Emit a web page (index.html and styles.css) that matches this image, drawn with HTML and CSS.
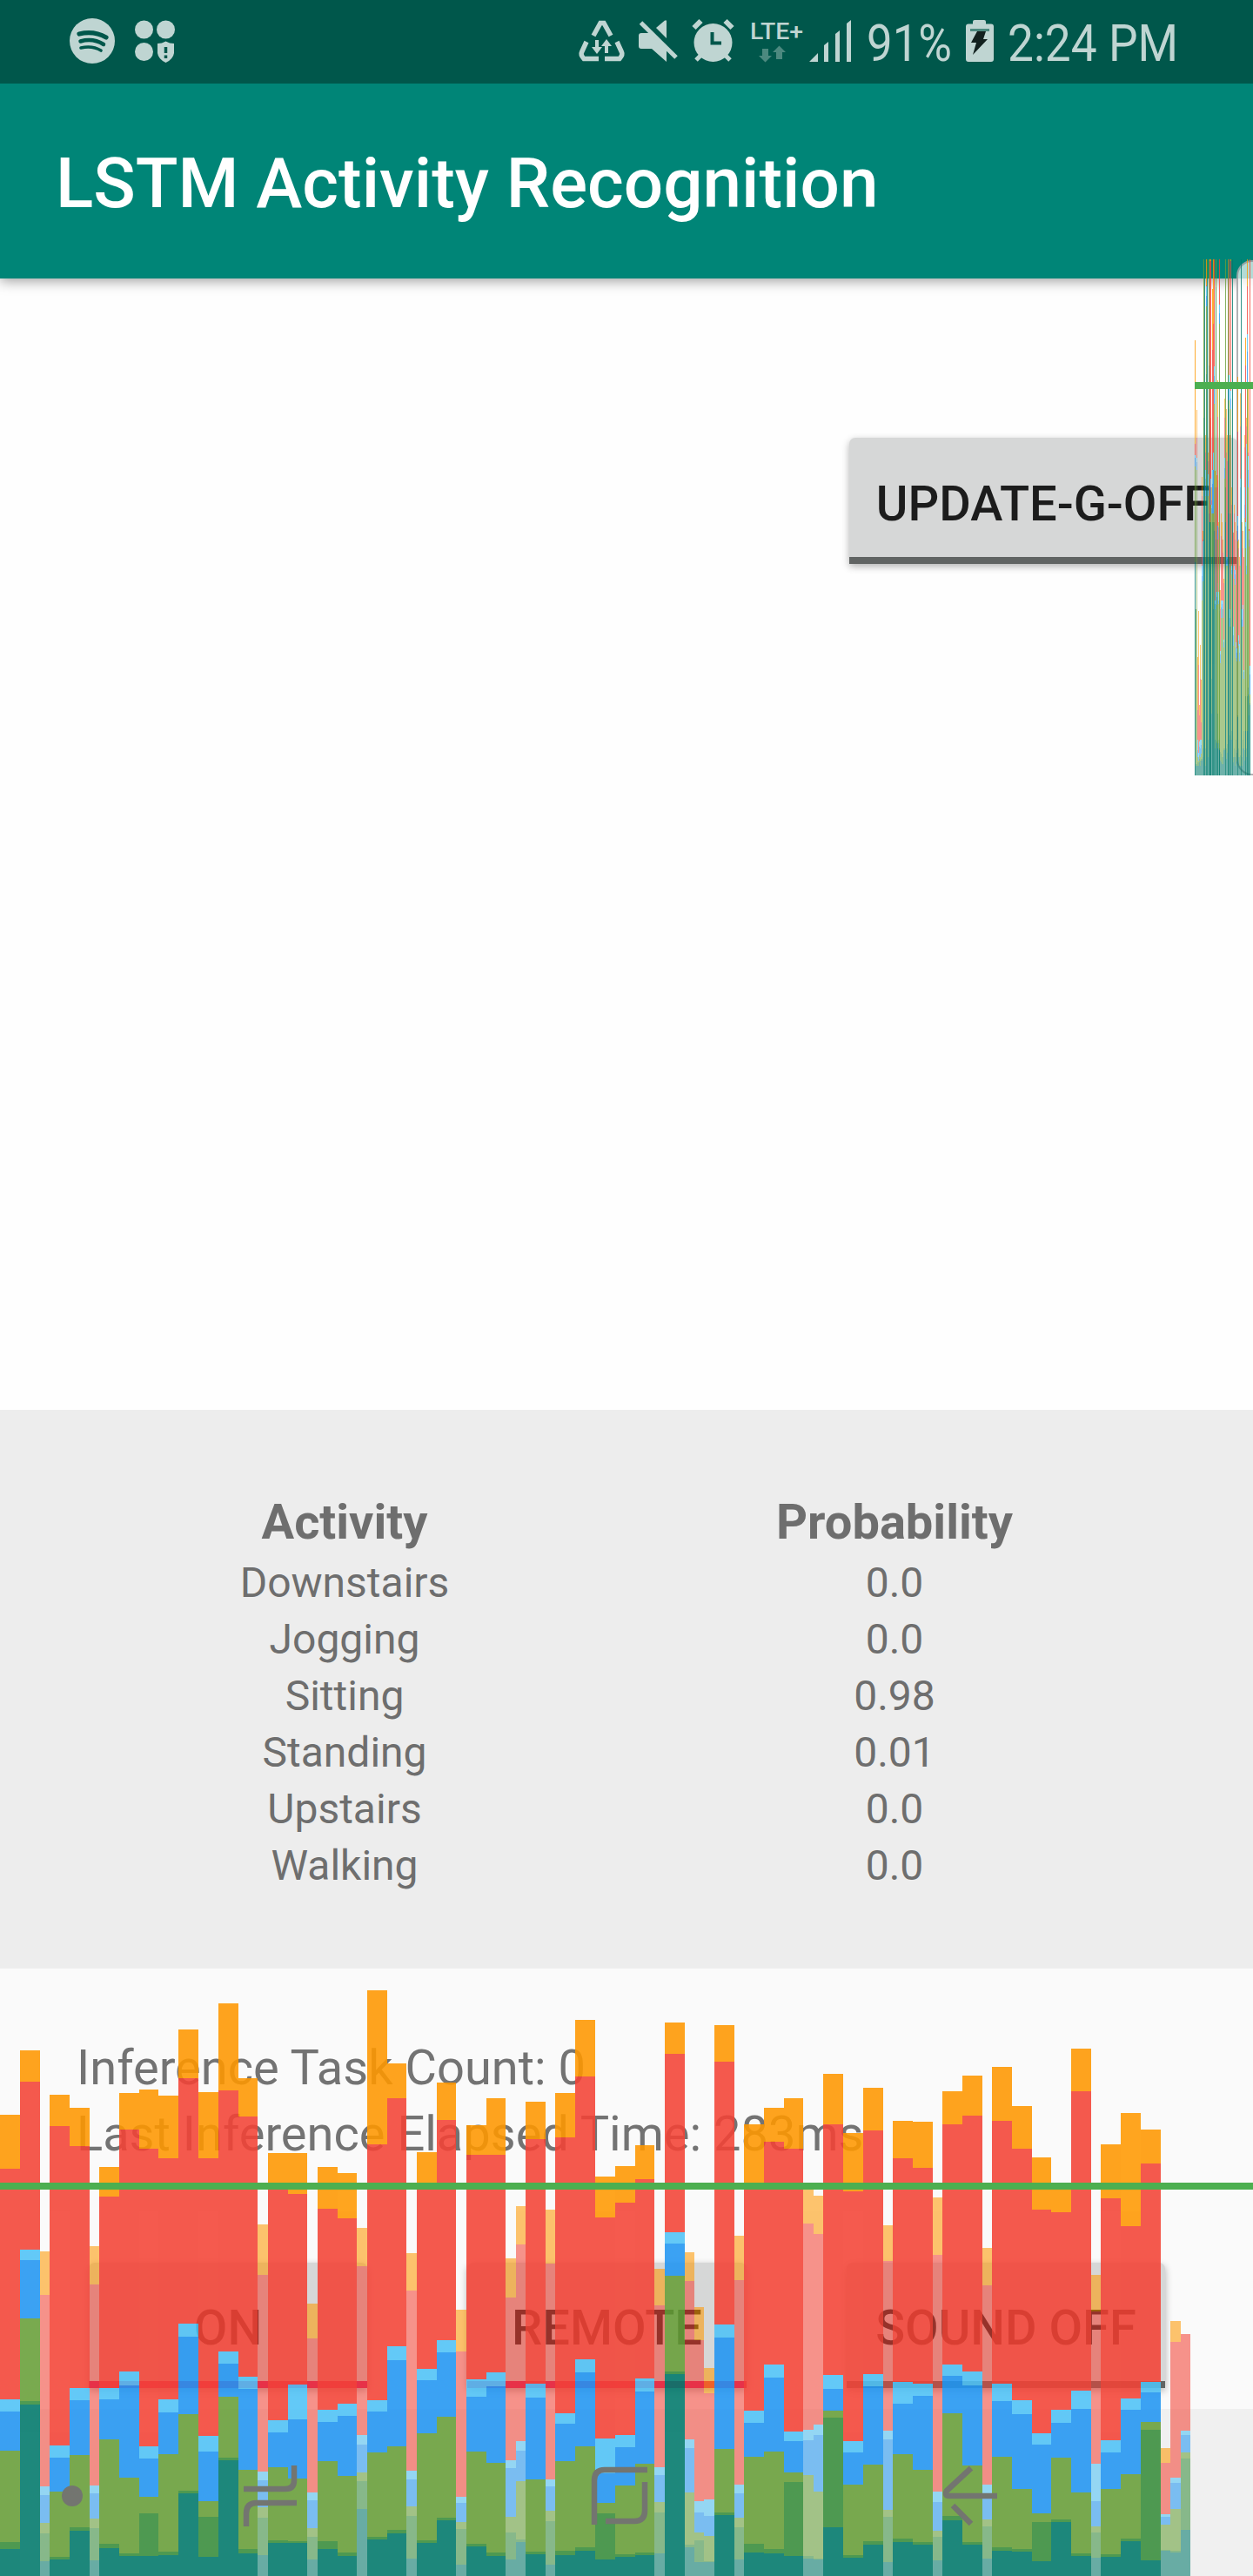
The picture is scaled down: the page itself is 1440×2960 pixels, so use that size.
FILE: index.html
```html
<!DOCTYPE html>
<html lang="en">
<head>
<meta charset="utf-8">
<title>LSTM Activity Recognition</title>
<link rel="stylesheet" href="styles.css">
</head>
<body>
<div class="screen">
  <header class="status-bar">
    <svg class="status-left" width="150" height="96" viewBox="70 0 150 96">
      <circle cx="106" cy="47" r="26"/>
      <path class="cut" d="M91 39 Q108 35 122 43" stroke-width="5.2"/>
      <path class="cut" d="M92.500 47.500 Q107 43.500 119 51" stroke-width="4.500"/>
      <path class="cut" d="M93 55 Q106 52 116 58" stroke-width="3.600"/>
      <circle cx="165.500" cy="34" r="10.500"/>
      <circle cx="190.500" cy="34" r="10.500"/>
      <circle cx="165.500" cy="59.500" r="10.500"/>
      <path d="M181 50 q5 0 9.500-2.500 q4.500 2.500 9.500 2.500 v11 q-1 7 -9.500 11 q-8.500-4 -9.500-11z"/>
      <path class="cut flat" d="M190.500 54v7M190.500 63.500v3.500" stroke-width="3.500"/>
    </svg>
    <svg class="status-right" width="740" height="96" viewBox="660 0 740 96">
      <path class="line" d="M682 41 L690 26.500 H694 L702 41 M674 48 L668.500 60 Q667 63 671 67.500 H688 M709 48 L714.500 60 Q716 63 712 67.500 H695" stroke-width="5.500"/>
      <path d="M684 46h4v8h4l-6 8-6-8h4zM695 61h4v-8h4l-6-8-6 8h4z"/>
      <path d="M734 41q0-3 3-3h10L766 56V71L749 56H737q-3 0-3-3z"/>
      <path d="M754 32L764 23.500h2V44z"/>
      <path class="line" d="M736.500 26L777 66" stroke-width="5"/>
      <circle cx="819.500" cy="49" r="22"/>
      <path class="line" d="M797.500 32l8-8M841.500 32l-8-8" stroke-width="6"/>
      <path class="line" d="M800 69l7-7M839 69l-7-7" stroke-width="5"/>
      <path class="cut flat" d="M818.500 37V49.500H829" stroke-width="4"/>
      <text class="net" x="862" y="45" textLength="61" lengthAdjust="spacingAndGlyphs">LTE+</text>
      <path class="dim" d="M876 56h7v8h4l-7.500 7.500-7.500-7.500h4zM892 68h7v-8h4l-7.500-7.500-7.500 7.500h4z"/>
      <path d="M930 71L940 61V71zM947 71V52l5-4V71zM960 71V39l5-4V71zM973 71V27l5-4V71z"/>
      <text x="996" y="70" textLength="98" lengthAdjust="spacingAndGlyphs">91%</text>
      <path d="M1113 27.500h5V25q0-2 2-2h11q2 0 2 2v2.500h6q3 0 3 3V68q0 3-3 3h-26q-3 0-3-3V30.500q0-3 3-3z"/>
      <path class="dim" d="M1115 33h22v3h-22z"/>
      <path class="bolt" d="M1123 36h10l-3 9h5l-17 18 4-14h-6z"/>
      <text x="1158" y="70" textLength="196" lengthAdjust="spacingAndGlyphs">2:24 PM</text>
    </svg>
  </header>
  <div class="app-bar"><h1>LSTM Activity Recognition</h1></div>

  <main class="plot-area">
    <button class="btn btn-update"><span>UPDATE-G-OFF</span></button>
  </main>

  <section class="results">
    <div class="head">Activity</div><div class="head">Probability</div>
    <div>Downstairs</div><div>0.0</div>
    <div>Jogging</div><div>0.0</div>
    <div>Sitting</div><div>0.98</div>
    <div>Standing</div><div>0.01</div>
    <div>Upstairs</div><div>0.0</div>
    <div>Walking</div><div>0.0</div>
  </section>

  <section class="controls">
    <p>Inference Task Count: 0</p>
    <p>Last Inference Elapsed Time: 283ms</p>
    <div class="buttons">
      <button class="btn on"><span>ON</span></button>
      <button class="btn on"><span>REMOTE</span></button>
      <button class="btn sound"><span>SOUND OFF</span></button>
    </div>
  </section>
  <footer class="nav-bar"></footer>

  <div class="edge-handle"></div>
  <svg class="gpu-side" id="side" width="67" height="595" viewBox="1373 297 67 595"></svg>
  <svg class="gpu-bottom" id="bottom" width="1440" height="700" viewBox="0 0 4320 1568" preserveAspectRatio="none"></svg>
  <svg class="nav-icons" width="1440" height="192" viewBox="0 2768 1440 192">
    <circle cx="83" cy="2868" r="12"/>
    <path d="M280 2860H328Q338 2860 338 2850V2833M283 2903V2888Q283 2876 295 2876H341"/>
    <path d="M683 2901V2850Q683 2838 695 2838H744M741 2852V2885Q741 2897 729 2897H696"/>
    <path d="M1116 2836L1088 2862Q1085 2868 1091 2868H1146M1095 2879L1116 2900"/>
  </svg>
</div>
<script src="script.js"></script>
</body>
</html>
```
FILE: styles.css
```css
* { box-sizing: border-box; }
body { margin: 0; font-family: Roboto, sans-serif; }
.screen {
  position: relative;
  display: flex;
  flex-direction: column;
  width: 1440px;
  height: 2960px;
  overflow: hidden;
  background: #fefefe;
  color: #6e6e6e;
}
.status-bar {
  height: 96px;
  padding: 0 40px 0 70px;
  display: flex;
  justify-content: space-between;
  background: #00574b;
  z-index: 2;
}
.status-bar svg { fill: #bfd5d2; overflow: visible; }
.status-bar .line { fill: none; stroke: #bfd5d2; }
.status-bar .cut { fill: none; stroke: #00574b; stroke-linecap: round; }
.status-bar .flat { stroke-linecap: butt; }
.status-bar .dim { fill: #4c897f; }
.status-bar .bolt { fill: #12211f; }
.status-bar text { font-size: 60px; }
.status-bar .net { font-size: 26px; font-weight: 500; }
.app-bar {
  height: 224px;
  flex: none;
  display: flex;
  align-items: center;
  padding-left: 64px;
  background: #008577;
  box-shadow: 0 3px 14px rgba(0, 0, 0, .38);
  z-index: 1;
}
h1 { margin: 6px 0 0; font-size: 80px; font-weight: 500; line-height: 94px; color: #fff; white-space: nowrap; }
.plot-area {
  height: 1300px;
  flex: none;
  display: flex;
  justify-content: flex-end;
  align-items: flex-start;
  padding: 183px 18px 0 0;
}
.btn {
  height: 144px;
  padding: 42px 0 0;
  display: flex;
  justify-content: center;
  align-items: flex-start;
  border: 0;
  border-bottom: 8px solid #616463;
  border-radius: 7px 7px 0 0;
  background: #d6d7d7;
  box-shadow: 0 3px 8px rgba(0, 0, 0, .3);
  font: 500 56px/66px Roboto, sans-serif;
  color: #1c1c1c;
  white-space: nowrap;
}
.btn-update { width: 446px; height: 145px; padding-top: 43px; }
.results {
  height: 642px;
  flex: none;
  padding: 96px 96px 0 80px;
  display: grid;
  grid-template-columns: 632px 632px;
  grid-template-rows: 70px;
  grid-auto-rows: 65px;
  background: #ededed;
  text-align: center;
  font-size: 48px;
  line-height: 65px;
}
.results .head { font-size: 56px; font-weight: 700; line-height: 66px; }
.controls {
  height: 506px;
  flex: none;
  padding: 81px 100px 0 88px;
  background: #fafafa;
}
.controls p { margin: 0; height: 76px; font-size: 56px; line-height: 66px; color: #737373; white-space: nowrap; }
.buttons { display: grid; grid-template-columns: 320px 321px 366px; column-gap: 115px; padding: 105px 0 0 14px; }
.buttons .on { border-bottom-color: #d81b60; }
.nav-bar { flex: 1; background: #f0f0f0; }
.edge-handle {
  position: absolute;
  left: 1421px;
  top: 299px;
  width: 40px;
  height: 592px;
  border: 2px solid rgba(125, 125, 130, .6);
  border-radius: 18px;
  background: rgba(255, 255, 255, .7);
  z-index: 1;
}
.gpu-side { position: absolute; left: 1373px; top: 297px; z-index: 2; }
.gpu-bottom { position: absolute; left: 0; top: 2260px; z-index: 2; }
.nav-icons { position: absolute; left: 0; top: 2768px; z-index: 3; fill: #737570; }
.nav-icons path { fill: none; stroke: #737570; stroke-width: 6.5; }
.full { opacity: .88; }
.light { opacity: .565; }
.gpu-side .full { opacity: .8; }
```
FILE: script.js
```js
// Stage colours of a frame bar, from its top down to its base.
const COLORS = ['#ff9800', '#f44336', '#4fc3f7', '#2196f3', '#689f38', '#388e3c', '#00796b'];
const NS = 'http://www.w3.org/2000/svg';

function rect(parent, x, y, w, h, fill) {
  if (h <= 0) return;
  const r = document.createElementNS(NS, 'rect');
  const a = { x, y, width: w, height: h, fill, 'shape-rendering': 'crispEdges' };
  for (const k in a) r.setAttribute(k, a[k]);
  parent.appendChild(r);
}
function stack(svg, cls, x, w, tops, base) {
  const g = document.createElementNS(NS, 'g');
  g.setAttribute('class', cls);
  tops.forEach((t, i) => rect(g, x, t, w, (i < tops.length - 1 ? tops[i + 1] : base) - t, COLORS[i]));
  svg.appendChild(g);
}

// x0, x1, then the top of every stage.
const frames = [
[0,69,381,520,1114,1145,1245,1481,1498],[69,138,215,296,728,755,905,1118,1127],
[138,171,732,844,1337,1360,1431,1458,1530],[171,240,329,410,1232,1263,1351,1519,1525],
[240,309,363,461,1084,1116,1257,1443,1452],[309,342,719,818,1335,1355,1420,1445,1528],
[342,411,515,591,1084,1113,1216,1486,1496],[411,480,325,419,1042,1077,1315,1510,1516],
[480,546,316,468,1234,1266,1365,1407,1516],[546,615,332,493,1114,1147,1254,1505,1514],
[615,684,161,287,918,952,1151,1348,1355],[684,753,323,493,1207,1248,1375,1416,1519],
[753,822,94,318,990,1021,1107,1263,1270],[822,888,287,385,1055,1086,1295,1499,1510],
[888,924,663,793,1299,1322,1391,1418,1514],[924,993,479,565,1167,1198,1289,1476,1483],
[993,1059,479,585,1076,1165,1317,1478,1483],[1059,1095,867,956,1353,1373,1445,1467,1525],
[1095,1164,515,623,1140,1172,1272,1478,1499],[1164,1230,530,647,1124,1156,1310,1508,1516],
[1230,1266,672,771,1205,1230,1301,1324,1396],[1266,1335,60,457,1116,1145,1249,1467,1474],
[1335,1401,249,338,977,1012,1234,1449,1458],[1401,1437,737,833,1297,1319,1389,1413,1523],
[1437,1506,477,562,1035,1064,1201,1476,1483],[1506,1572,298,394,962,992,1158,1418,1425],
[1572,1608,883,990,1364,1380,1430,1447,1539],[1608,1677,408,484,1062,1107,1248,1485,1492],
[1677,1743,338,484,1044,1080,1277,1508,1516],[1743,1779,750,851,1270,1291,1416,1456,1525],
[1779,1812,616,715,1221,1245,1324,1474,1481],[1812,1881,347,444,1073,1109,1320,1505,1512],
[1881,1914,625,764,1319,1337,1401,1427,1539],[1914,1983,325,439,1149,1176,1272,1503,1514],
[1983,2052,137,282,1010,1044,1234,1494,1503],[2052,2121,540,645,1214,1304,1380,1407,1525],
[2121,2190,513,607,1205,1236,1335,1512,1519],[2190,2256,459,547,1060,1093,1280,1508,1514],
[2256,2292,777,871,1288,1308,1378,1404,1510],[2292,2361,143,224,683,712,795,1042,1048],
[2361,2394,735,809,1216,1239,1353,1487,1494],[2394,2427,876,961,1375,1404,1456,1476,1532],
[2427,2463,1033,1098,1371,1413,1464,1530,1532],[2463,2532,150,244,921,954,1242,1404,1411],
[2532,2565,692,806,1333,1355,1418,1443,1525],[2565,2634,405,562,1142,1174,1262,1485,1508],
[2634,2703,363,450,1024,1057,1248,1499,1510],[2703,2769,338,468,1196,1221,1302,1326,1516],
[2769,2805,560,661,1192,1219,1308,1516,1523],[2805,2838,589,688,1178,1205,1351,1523,1525],
[2838,2907,276,405,1051,1086,1142,1160,1443],[2907,2976,428,578,1221,1250,1333,1514,1521],
[2976,3045,311,421,1048,1080,1281,1478,1487],[3045,3078,665,757,1194,1216,1398,1416,1532],
[3078,3147,396,493,1068,1124,1254,1472,1481],[3147,3216,399,517,1073,1104,1295,1481,1487],
[3216,3249,594,741,1351,1378,1452,1467,1528],[3249,3318,320,405,1024,1053,1148,1413,1425],
[3318,3387,280,383,1042,1077,1284,1481,1487],[3387,3420,724,820,1333,1355,1422,1440,1523],
[3420,3489,258,396,1073,1118,1260,1494,1503],[3489,3558,358,468,1116,1151,1344,1499,1505],
[3558,3624,491,625,1201,1230,1407,1429,1530],[3624,3693,560,632,1140,1174,1264,1422,1429],
[3693,3762,211,320,1091,1138,1353,1510,1516],[3762,3795,793,887,1279,1375,1440,1456,1521],
[3795,3864,457,596,1219,1250,1344,1512,1519],[3864,3933,376,668,1111,1140,1306,1472,1478],
[3933,4002,419,506,1068,1095,1171,1192,1528],[4002,4035,1239,1277,1409,1416,1436,1501,1503],
[4035,4071,912,965,1315,1328,1396,1503,1507],[4071,4104,945,945,1194,1205,1250,1266,1449]];
const bottom = document.getElementById('bottom');
for (const [a, b, ...tops] of frames) stack(bottom, b - a > 50 ? 'full' : 'light', a, b - a, tops, 1568);
rect(bottom, 0, 556, 4320, 17, '#4caf50');

// One-pixel columns of the side graph: column, then stage tops.
const pale = [
[1,700,700,700,700,700,878,880],[2,471,503,526,531,540,878,880],[3,755,816,850,862,870,876,880],[4,702,764,865,870,874,876,880],
[5,810,822,852,858,868,872,876],[6,741,780,850,860,870,874,880],[7,781,830,850,856,866,872,874],
[8,548,570,650,662,690,872,874],[9,610,620,622,640,668,860,870],
[12,500,520,540,550,570,860,880],[15,520,530,545,560,570,850,870],[18,480,490,520,540,560,800,840],
[19,560,575,580,584,590,780,820],[23,541,560,690,694,700,850,860],[24,540,610,680,684,690,850,853],
[25,546,560,680,686,695,852,854],[26,552,552,670,680,690,852,854],[27,600,606,680,690,694,850,854],
[28,678,690,700,702,705,848,850],[29,678,700,748,752,762,864,874],[30,590,616,690,698,710,866,876],
[31,600,620,690,694,700,870,878],[32,620,635,690,700,710,870,878],[33,665,670,735,738,744,860,862],
[34,458,480,526,538,550,860,862],[36,470,520,640,644,650,860,872],[37,500,530,640,642,650,855,865],
[40,500,500,700,710,720,845,850],[42,560,580,650,655,660,840,850],[44,612,612,720,730,742,870,876],
[45,580,590,650,655,665,860,870],[46,600,620,655,660,672,870,880],[47,640,640,738,744,756,850,862],
[48,610,610,745,750,760,865,875],[50,620,630,730,736,742,860,870],[51,640,650,740,750,760,870,880],
[52,452,490,550,560,650,868,880],[54,600,610,700,712,720,870,880],[55,610,630,695,700,720,850,860],
[56,640,640,770,772,780,840,860],[57,500,514,560,580,595,862,874],[59,480,490,510,650,660,860,870],
[62,608,608,610,620,628,800,822]];
const deep = [
[0,391,510,523,526,536,640,646],[10,298,298,298,298,298,480,560],[11,298,298,298,298,298,298,298],
[13,298,328,329,340,352,430,560],[14,298,298,298,298,298,298,320],[16,298,298,298,298,298,420,590],
[17,298,300,600,600,600,600,600],[18,298,300,550,560,580,600,640],[20,332,402,540,556,590,600,640],
[21,298,372,520,540,590,600,700],[22,298,298,421,432,464,600,610],[24,298,298,298,298,298,330,620],
[26,437,479,604,604,620,820,860],[28,298,298,350,360,372,860,862],[35,298,298,298,298,298,560,600],
[38,298,298,298,298,298,431,440],[39,298,298,431,440,460,470,590],[41,298,300,449,458,470,590,720],
[43,298,298,298,298,298,298,298],[49,433,496,593,604,622,822,824],[53,298,298,298,298,298,298,298],
[58,388,420,600,605,630,800,840],[60,298,329,384,404,440,800,840],[61,444,520,524,540,560,790,798],
[63,298,298,765,775,798,808,810]];
const side = document.getElementById('side');
for (const [c, ...tops] of pale) stack(side, 'light', 1373 + c, 1, tops, 891);
for (const [c, ...tops] of deep) stack(side, 'full', 1373 + c, 1, tops, 891);
rect(side, 1373, 439, 67, 8, '#4caf50');
```
